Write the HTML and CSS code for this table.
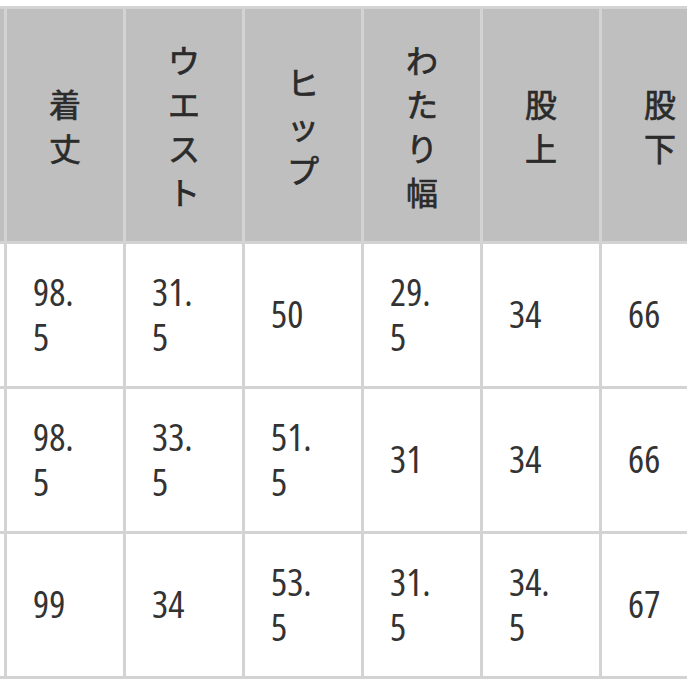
FILE: index.html
```html
<!DOCTYPE html>
<html lang="ja">
<head>
<meta charset="utf-8">
<title>サイズ表</title>
<link rel="stylesheet" href="styles.css">
</head>
<body>
<div class="frame">
  <table class="size-table">
    <colgroup>
      <col class="col"><col class="col"><col class="col"><col class="col"><col class="col"><col class="col"><col class="col">
    </colgroup>
    <thead>
      <tr>
        <th></th>
        <th><span class="stack">着丈</span></th>
        <th><span class="stack">ウエスト</span></th>
        <th><span class="stack">ヒップ</span></th>
        <th><span class="stack">わたり幅</span></th>
        <th><span class="stack">股上</span></th>
        <th><span class="stack">股下</span></th>
      </tr>
    </thead>
    <tbody>
      <tr>
        <td></td>
        <td>98.<br>5</td>
        <td>31.<br>5</td>
        <td>50</td>
        <td>29.<br>5</td>
        <td>34</td>
        <td>66</td>
      </tr>
      <tr>
        <td></td>
        <td>98.<br>5</td>
        <td>33.<br>5</td>
        <td>51.<br>5</td>
        <td>31</td>
        <td>34</td>
        <td>66</td>
      </tr>
      <tr>
        <td></td>
        <td>99</td>
        <td>34</td>
        <td>53.<br>5</td>
        <td>31.<br>5</td>
        <td>34.<br>5</td>
        <td>67</td>
      </tr>
    </tbody>
  </table>
</div>
</body>
</html>
```
FILE: styles.css
```css
html, body {
  margin: 0;
  padding: 0;
  background: #ffffff;
}

.frame {
  width: 687px;
  height: 687px;
  overflow: hidden;
  padding-top: 6px;
  box-sizing: border-box;
}

.size-table {
  margin-left: -115px;
  border-collapse: separate;
  border-spacing: 3px;
  background: #d3d3d3;
  table-layout: fixed;
  width: 836px;
}

.col {
  width: 116px;
}

.size-table th {
  height: 232px;
  padding: 0;
  background: #bfbfbf;
  color: #2b2b2b;
  font-family: "Noto Sans CJK JP", "Noto Sans", sans-serif;
  font-size: 32px;
  font-weight: 400;
  -webkit-text-stroke: 0.7px #2b2b2b;
  line-height: 44px;
  text-align: center;
  vertical-align: middle;
}

.stack {
  display: inline-block;
  width: 1em;
  word-break: break-all;
}

.size-table td {
  height: 139px;
  padding: 0 0 3px 26px;
  background: #ffffff;
  color: #333333;
  font-family: "Open Sans", "DejaVu Sans Condensed", sans-serif;
  font-stretch: 75%;
  font-weight: 400;
  font-size: 38px;
  line-height: 45px;
  text-align: left;
  vertical-align: middle;
}
```
